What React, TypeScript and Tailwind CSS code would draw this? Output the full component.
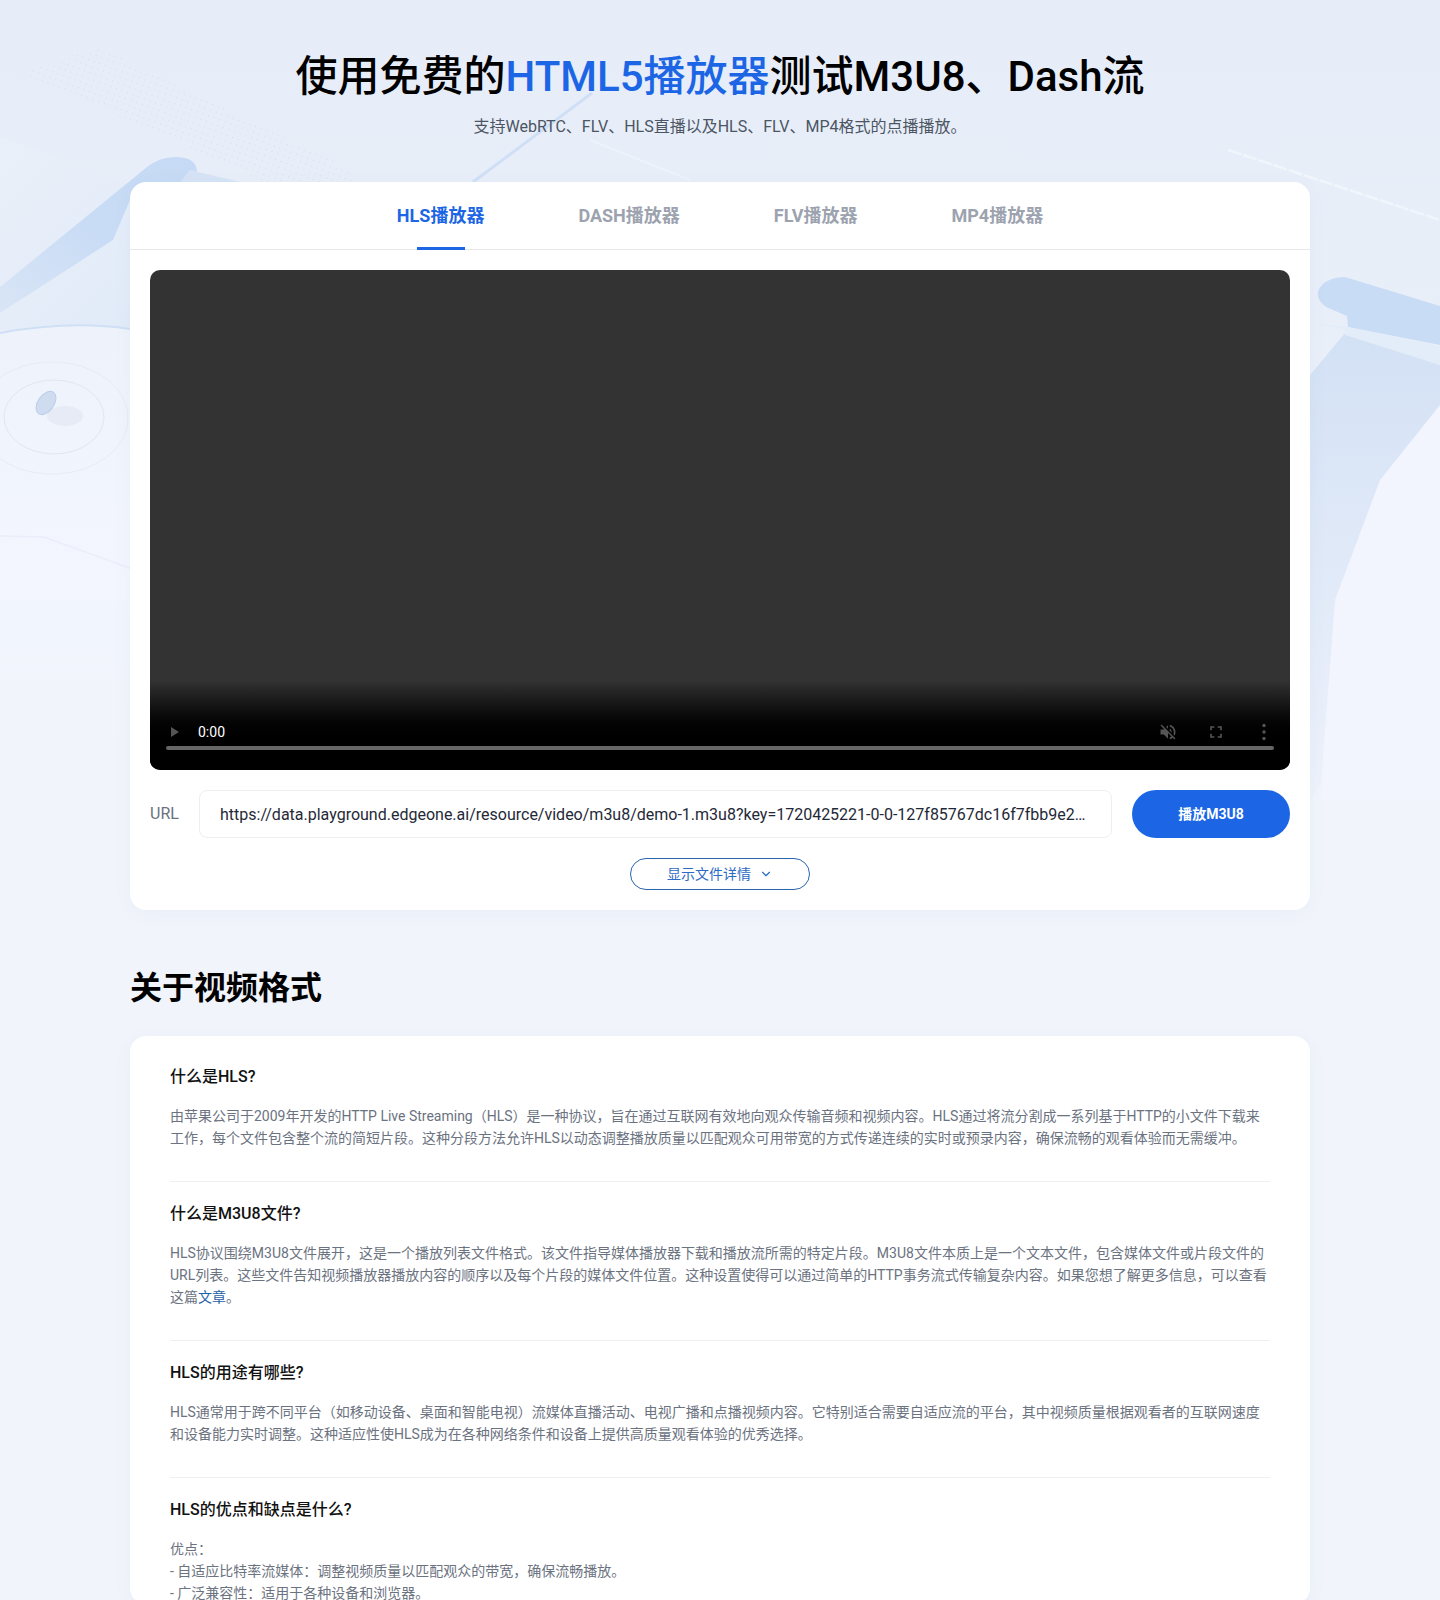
import React from "react";
import { ChevronDown } from "lucide-react";

function Backdrop() {
  return (
    <svg className="absolute left-0 top-0" width="1440" height="800" viewBox="0 0 1440 800" aria-hidden="true">
      <defs>
        <linearGradient id="pageBg" x1="0" y1="0" x2="0" y2="1">
          <stop offset="0" stopColor="#e7edf8" />
          <stop offset="0.42" stopColor="#e9eff9" />
          <stop offset="0.75" stopColor="#f1f5fd" />
          <stop offset="1" stopColor="#f1f4fb" />
        </linearGradient>
        <linearGradient id="bandL" x1="0" y1="1" x2="1" y2="0">
          <stop offset="0" stopColor="#d9e5f6" />
          <stop offset="0.5" stopColor="#c9dcf5" />
          <stop offset="1" stopColor="#c6daf5" />
        </linearGradient>
        <linearGradient id="panelL" x1="0" y1="0" x2="1" y2="1">
          <stop offset="0" stopColor="#eaf0f9" />
          <stop offset="1" stopColor="#dfe9f8" />
        </linearGradient>
        <linearGradient id="panelR" x1="0" y1="0" x2="0" y2="1">
          <stop offset="0" stopColor="#d3e1f5" />
          <stop offset="1" stopColor="#eef2fb" />
        </linearGradient>
        <linearGradient id="discL" x1="0" y1="0" x2="0" y2="1">
          <stop offset="0" stopColor="#eef3fb" />
          <stop offset="1" stopColor="#f3f6fe" />
        </linearGradient>
        <pattern id="dots" width="6" height="6" patternUnits="userSpaceOnUse" patternTransform="rotate(20)">
          <circle cx="1.5" cy="1.5" r="0.7" fill="#d3dced" />
        </pattern>
      </defs>
      <rect width="1440" height="800" fill="url(#pageBg)" />
      <polygon points="20,72 100,48 352,170 350,210 260,180 130,120" fill="url(#dots)" opacity="0.85" />
      <polygon points="0,137 130,185 200,185 130,340 0,330" fill="url(#panelL)" />
      <path d="M0 287 L147 167 Q160 157 175 157 Q197 157 197 172 Q197 182 180 182 L130 200 L113 240 L0 313 Z" fill="url(#bandL)" />
      <path d="M180 182 L240 182 L190 170 Z" fill="#d6e3f6" />
      <path d="M0 332 Q70 318 140 330 L140 600 L0 600 Z" fill="url(#discL)" />
      <path d="M0 333 Q70 320 130 329" fill="none" stroke="#cfdff5" strokeWidth="2" />
      <path d="M0 536 L44 537 L135 570" fill="none" stroke="#e9eefa" strokeWidth="1.5" />
      <ellipse cx="54" cy="417" rx="50" ry="37" fill="none" stroke="#dfe7f3" strokeWidth="1" />
      <ellipse cx="52" cy="418" rx="76" ry="56" fill="none" stroke="#e6ecf6" strokeWidth="1" />
      <ellipse cx="65" cy="416" rx="18" ry="10" fill="#e6ebf5" />
      <ellipse cx="46" cy="403" rx="8" ry="13" transform="rotate(35 46 403)" fill="#cfdcf0" stroke="#bccde8" strokeWidth="1" />
      <line x1="473" y1="182" x2="592" y2="93" stroke="#cfdff6" strokeWidth="3" />
      <line x1="0" y1="0" x2="0" y2="0" />
      <line x1="590" y1="140" x2="690" y2="180" stroke="#eef3fc" strokeWidth="1.5" />
      <line x1="1228" y1="150" x2="1440" y2="220" stroke="#f1f5fc" strokeWidth="2.5" strokeDasharray="14 2" />
      <polygon points="1310,375 1345,333 1440,365 1440,600 1310,800" fill="url(#panelR)" />
      <path d="M1440 405 L1380 480 L1335 600 L1320 800 L1440 800 Z" fill="#f2f5fd" />
      <path d="M1345 277 Q1330 277 1322 285 Q1312 296 1326 307 L1347 316 L1348 327 L1440 345 L1440 306 Z" fill="#c8dcf5" />
      <path d="M1310 322 L1345 330 L1345 335 L1440 365 L1440 346 L1347 327" fill="#e3ecf9" />
    </svg>
  );
}

function Item({ title, last, children }: { title: React.ReactNode; last?: boolean; children: React.ReactNode }) {
  return (
    <section className={last ? "pt-5" : "border-b border-[#f0f0f2] pt-5 pb-8"}>
      <h3 className="text-base leading-6 font-medium text-[#111]">{title}</h3>
      <div className="mt-4 text-sm leading-[22px] text-[#6b7280]">{children}</div>
    </section>
  );
}

export default function App() {
  return (
    <div className="relative h-[1600px] overflow-hidden bg-[#f1f4fb] font-['Roboto','Noto_Sans_CJK_SC',sans-serif]">
      <Backdrop />
      <div className="relative mx-auto w-[1180px] pt-[49px]">
        <h1 className="text-center text-[42px] leading-[56px] font-medium text-black">
          使用免费的<span className="text-[#1c66e5]">HTML5播放器</span>测试M3U8、Dash流
        </h1>
        <p className="mt-[10px] text-center text-base leading-6 text-[#4b5563]">
          支持WebRTC、FLV、HLS直播以及HLS、FLV、MP4格式的点播播放。
        </p>

        <div className="mt-[43px] rounded-2xl bg-white shadow-[0_4px_20px_rgba(60,90,160,0.04)]">
          <div className="flex h-[68px] items-center justify-center gap-[94px] border-b border-[#e5e7eb] text-lg font-bold text-[#9ca3af]">
            <div className="relative flex h-full items-center text-[#1c66e5]">
              HLS播放器
              <span className="absolute bottom-[-1px] left-1/2 h-[3px] w-12 -translate-x-1/2 bg-[#1c66e5]" />
            </div>
            <div>DASH播放器</div>
            <div>FLV播放器</div>
            <div>MP4播放器</div>
          </div>

          <div className="p-5">
            <div className="relative h-[500px] overflow-hidden rounded-[10px] bg-[#333333]">
              <div className="absolute inset-x-0 bottom-0 h-[90px] bg-gradient-to-b from-[#333333] to-black to-[72%]">
                <div className="absolute inset-x-4 top-[42px] flex h-5 items-center justify-between">
                  <div className="flex items-center gap-[19px] pl-[5px]">
                    <svg width="8" height="10" viewBox="0 0 8 10"><path d="M0 0 L8 5 L0 10 Z" fill="#555" /></svg>
                    <span className="text-sm leading-5 text-white">0:00</span>
                  </div>
                  <div className="flex items-center gap-7 pr-[-2px]">
                    <svg width="20" height="20" viewBox="0 0 24 24" fill="#555"><path d="M16.5 12c0-1.77-1.02-3.29-2.5-4.03v2.21l2.45 2.45c.03-.2.05-.41.05-.63zm2.5 0c0 .94-.2 1.82-.54 2.64l1.51 1.51C20.63 14.91 21 13.5 21 12c0-4.28-2.99-7.86-7-8.77v2.06c2.89.86 5 3.54 5 6.71zM4.27 3L3 4.27 7.73 9H3v6h4l5 5v-6.73l4.25 4.25c-.67.52-1.42.93-2.25 1.18v2.06c1.38-.31 2.63-.95 3.69-1.81L19.73 21 21 19.73l-9-9L4.27 3zM12 4L9.91 6.09 12 8.18V4z" /></svg>
                    <svg width="20" height="20" viewBox="0 0 24 24" fill="#555"><path d="M7 14H5v5h5v-2H7v-3zm-2-4h2V7h3V5H5v5zm12 7h-3v2h5v-5h-2v3zM14 5v2h3v3h2V5h-5z" /></svg>
                    <svg width="20" height="20" viewBox="0 0 20 20" fill="#555"><circle cx="10" cy="3.5" r="1.7" /><circle cx="10" cy="10" r="1.7" /><circle cx="10" cy="16.5" r="1.7" /></svg>
                  </div>
                </div>
                <div className="absolute inset-x-4 top-[66px] h-1 rounded-full bg-[#666]" />
              </div>
            </div>

            <div className="mt-5 flex items-center gap-5">
              <span className="w-[29px] text-base text-[#6b7280]">URL</span>
              <input
                readOnly
                value="https://data.playground.edgeone.ai/resource/video/m3u8/demo-1.m3u8?key=1720425221-0-0-127f85767dc16f7fbb9e2…"
                className="h-12 min-w-0 flex-1 truncate rounded-lg border border-[#eeeff2] bg-white px-5 text-base text-[#1f2937] outline-none"
              />
              <button className="h-12 w-[158px] rounded-full bg-[#1c66e5] text-sm font-bold text-white">播放M3U8</button>
            </div>

            <div className="mt-5 flex justify-center">
              <button className="flex h-8 w-[180px] items-center justify-center gap-2 rounded-full border border-[#2c63ad] text-sm text-[#2c6bc4]">
                显示文件详情
                <ChevronDown size={14} />
              </button>
            </div>
          </div>
        </div>

        <h2 className="mt-[56px] mb-[26px] text-[32px] leading-[44px] font-bold text-black">关于视频格式</h2>

        <div className="rounded-2xl bg-white px-10 pt-[9px] shadow-[0_4px_20px_rgba(60,90,160,0.04)]">
          <Item title="什么是HLS?">
            由苹果公司于2009年开发的HTTP Live Streaming（HLS）是一种协议，旨在通过互联网有效地向观众传输音频和视频内容。HLS通过将流分割成一系列基于HTTP的小文件下载来工作，每个文件包含整个流的简短片段。这种分段方法允许HLS以动态调整播放质量以匹配观众可用带宽的方式传递连续的实时或预录内容，确保流畅的观看体验而无需缓冲。
          </Item>
          <Item title="什么是M3U8文件?">
            HLS协议围绕M3U8文件展开，这是一个播放列表文件格式。该文件指导媒体播放器下载和播放流所需的特定片段。M3U8文件本质上是一个文本文件，包含媒体文件或片段文件的URL列表。这些文件告知视频播放器播放内容的顺序以及每个片段的媒体文件位置。这种设置使得可以通过简单的HTTP事务流式传输复杂内容。如果您想了解更多信息，可以查看这篇<a className="text-[#1d5fa8]" href="#">文章</a>。
          </Item>
          <Item title="HLS的用途有哪些?">
            HLS通常用于跨不同平台（如移动设备、桌面和智能电视）流媒体直播活动、电视广播和点播视频内容。它特别适合需要自适应流的平台，其中视频质量根据观看者的互联网速度和设备能力实时调整。这种适应性使HLS成为在各种网络条件和设备上提供高质量观看体验的优秀选择。
          </Item>
          <Item title="HLS的优点和缺点是什么?" last>
            <p>优点：</p>
            <p>- 自适应比特率流媒体：调整视频质量以匹配观众的带宽，确保流畅播放。</p>
            <p>- 广泛兼容性：适用于各种设备和浏览器。</p>
          </Item>
        </div>
      </div>
    </div>
  );
}
